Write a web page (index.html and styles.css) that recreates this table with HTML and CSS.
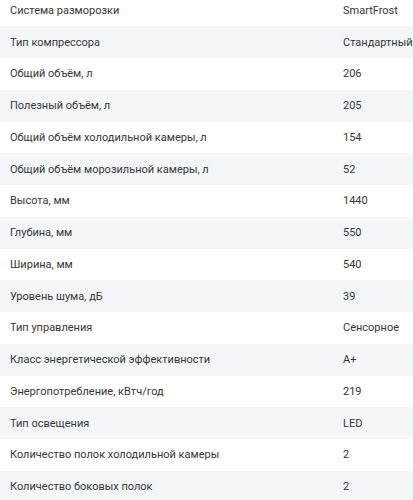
FILE: index.html
```html
<!DOCTYPE html>
<html lang="ru">
<head>
<meta charset="utf-8">
<link rel="stylesheet" href="styles.css">
</head>
<body>
<div class="specs">
  <div class="row"><span class="label">Система разморозки</span><span class="value">SmartFrost</span></div>
  <div class="row"><span class="label">Тип компрессора</span><span class="value">Стандартный</span></div>
  <div class="row"><span class="label">Общий объём, л</span><span class="value">206</span></div>
  <div class="row"><span class="label">Полезный объём, л</span><span class="value">205</span></div>
  <div class="row"><span class="label">Общий объём холодильной камеры, л</span><span class="value">154</span></div>
  <div class="row"><span class="label">Общий объём морозильной камеры, л</span><span class="value">52</span></div>
  <div class="row"><span class="label">Высота, мм</span><span class="value">1440</span></div>
  <div class="row"><span class="label">Глубина, мм</span><span class="value">550</span></div>
  <div class="row"><span class="label">Ширина, мм</span><span class="value">540</span></div>
  <div class="row"><span class="label">Уровень шума, дБ</span><span class="value">39</span></div>
  <div class="row"><span class="label">Тип управления</span><span class="value">Сенсорное</span></div>
  <div class="row"><span class="label">Класс энергетической эффективности</span><span class="value">A+</span></div>
  <div class="row"><span class="label">Энергопотребление, кВтч/год</span><span class="value">219</span></div>
  <div class="row"><span class="label">Тип освещения</span><span class="value">LED</span></div>
  <div class="row"><span class="label">Количество полок холодильной камеры</span><span class="value">2</span></div>
  <div class="row"><span class="label">Количество боковых полок</span><span class="value">2</span></div>
</div>
</body>
</html>
```
FILE: styles.css
```css
html, body {
  margin: 0;
  padding: 0;
  background: #ffffff;
  overflow: hidden;
}
body {
  font-family: Roboto, Inter, sans-serif;
  font-size: 11px;
  color: #363636;
}
.specs {
  margin-top: -5.5px;
  display: flex;
  flex-direction: column;
}
.row {
  display: grid;
  grid-template-columns: 333px 1fr;
  align-items: center;
  height: 31.75px;
  padding-left: 10px;
  white-space: nowrap;
}
.row:nth-child(even) {
  background: #f5f6fa;
}
```
